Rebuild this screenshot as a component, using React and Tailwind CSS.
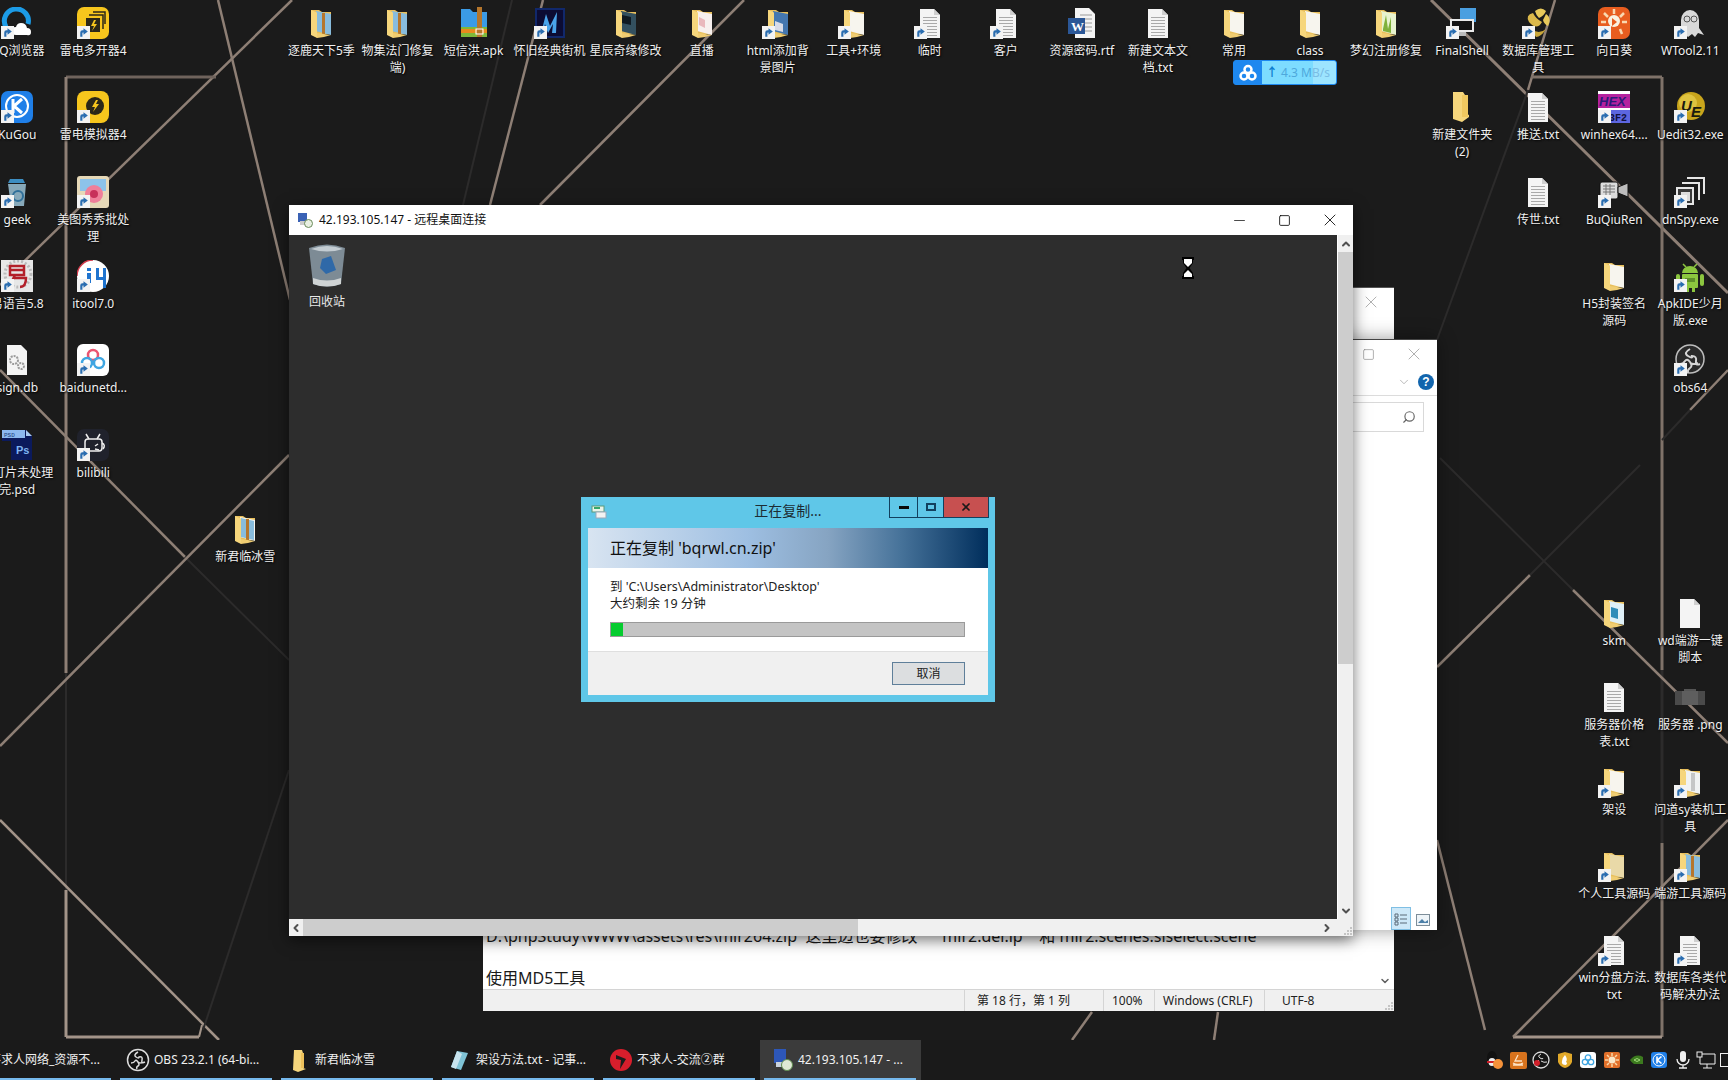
import { Minus, Square, X, ChevronUp, ChevronDown, ChevronLeft, ChevronRight, Search } from 'lucide-react'

const FONT = "font-['Noto_Sans','Noto_Sans_CJK_SC',sans-serif]"

// wallpaper lines, [x1, y1, x2, y2, colour, width]
const BRIGHT = '#8e7f75'
const FAINT = '#2c2b2b'
const LINES = [
    [218, 0, 290, 300, BRIGHT, 2.5],
    [292, 0, 0, 285, BRIGHT, 2.5],
    [66, 77, 216, 77, '#6f635c', 3],
    [66, 77, 66, 673, BRIGHT, 3],
    [66, 673, 66, 890, FAINT, 2],
    [66, 890, 66, 1037, '#a39489', 3],
    [66, 1037, 199, 1037, '#a39489', 3],
    [199, 1037, 202, 1025, '#a39489', 2],
    [0, 370, 185, 557, BRIGHT, 2.5],
    [185, 557, 289, 660, FAINT, 2],
    [0, 746, 289, 455, BRIGHT, 2.5],
    [0, 820, 219, 1040, '#a39489', 2.5],
    [289, 770, 203, 1030, FAINT, 2],
    [744, 0, 540, 205, BRIGHT, 2.5],
    [543, 0, 490, 205, BRIGHT, 2.5],
    [512, 0, 463, 205, FAINT, 2],
    [1092, 1012, 1072, 1040, BRIGHT, 2.5],
    [1218, 1012, 1214, 1040, BRIGHT, 2.5],
    [1431, 0, 1728, 293, BRIGHT, 3],
    [1555, 0, 1528, 90, BRIGHT, 2.5],
    [1528, 90, 1437, 340, FAINT, 2],
    [1531, 77, 1662, 77, '#7f7269', 3],
    [1662, 77, 1662, 670, '#7f7269', 3],
    [1662, 670, 1662, 843, FAINT, 3],
    [1662, 843, 1662, 1037, '#7f7269', 3],
    [1513, 1037, 1662, 1037, '#a39489', 3],
    [1728, 370, 1690, 410, BRIGHT, 2.5],
    [1690, 410, 1662, 440, FAINT, 2],
    [1437, 667, 1530, 575, BRIGHT, 2.5],
    [1530, 575, 1640, 465, FAINT, 2],
    [1440, 458, 1573, 590, FAINT, 2],
    [1573, 590, 1728, 743, BRIGHT, 2.5],
    [1728, 820, 1513, 1037, BRIGHT, 2.5],
    [1437, 840, 1485, 1030, BRIGHT, 2.5],
]

function Wallpaper() {
    return (
        <svg className="absolute inset-0" width="1728" height="1080" viewBox="0 0 1728 1080">
            {LINES.map(([x1, y1, x2, y2, c, w], i) => (
                <line key={i} x1={x1} y1={y1} x2={x2} y2={y2} stroke={c} strokeWidth={w} />
            ))}
        </svg>
    )
}

// --- icon drawings, all on a 32 box ---
const Svg = ({ children }) => <svg viewBox="0 0 32 32" width="32" height="32" className="block">{children}</svg>

function Folder({ inner = '#f7f5ee', accent }) {
    return (
        <Svg>
            <path d="M6 3h8l3 2h9v22H6z" fill="#e8bf5c" />
            <path d="M11 4l15 3v21l-15-4z" fill={inner} />
            {accent}
            <path d="M6 3l6 2.500V31l-6-3z" fill="#f6d67c" />
            <path d="M12 26l14 2-7 2-7 1z" fill="#f0cd72" />
        </Svg>
    )
}

function Doc({ lines = true }) {
    return (
        <Svg>
            <path d="M6 2h14l6 6v23H6z" fill="#f4f4f4" />
            <path d="M20 2l6 6h-6z" fill="#cfcfcf" />
            {lines && [10, 13, 16, 19, 22, 25, 28].map(y => <rect key={y} x="9" y={y} width="14" height="1" fill="#a9a9a9" />)}
        </Svg>
    )
}

const Shortcut = () => (
    <svg viewBox="0 0 12 12" width="13" height="13" className="absolute left-0 bottom-0">
        <rect width="12" height="12" fill="#f3f3f3" />
        <path d="M3 10V6q0-2 2-2h1V2l4 3-4 3V6H5.500q-.5 0-.5.500V10z" fill="#2a6db0" />
    </svg>
)

const ART = {
    qqb: <Svg><path d="M5 20A12 12 0 1 1 27 17" fill="none" stroke="#1c9be6" strokeWidth="5" /><path d="M15 28q-5 0-5-4t5-4q1-4 5-4 5 0 6 5 4 0 4 4t-4 3z" fill="#fff" /></Svg>,
    ld2: <Svg><rect width="32" height="32" rx="7" fill="#f7c61d" /><path d="M9 11h14v14H9z" fill="#2b2718" /><path d="M12 8h14v14" fill="none" stroke="#2b2718" strokeWidth="1.500" /><path d="M16 5h12v12" fill="none" stroke="#2b2718" strokeWidth="1.500" /><path d="M17 13l-3 6h3l-2 5 5-7h-3l2-4z" fill="#f7c61d" /></Svg>,
    ld: <Svg><rect width="32" height="32" rx="8" fill="#f7c61d" /><circle cx="18" cy="15" r="9" fill="#2b2718" /><path d="M19 9l-4 7h3l-2 5 6-8h-3l2-4z" fill="#f7c61d" /></Svg>,
    kugou: <Svg><rect width="32" height="32" rx="7" fill="#1f7fe8" /><circle cx="16" cy="15" r="11" fill="none" stroke="#fff" strokeWidth="2" /><path d="M12 8v14M21 8l-8 7 8 7" fill="none" stroke="#fff" strokeWidth="3" /></Svg>,
    geek: <Svg><path d="M9 3h13l2 4H7z" fill="#3d8ec2" /><path d="M7 8h18l-2 22H10z" fill="#87a9ba" /><circle cx="17" cy="20" r="5" fill="none" stroke="#2f6f99" strokeWidth="2" /></Svg>,
    meitu: <Svg><rect width="32" height="32" rx="3" fill="#e6d9b8" /><path d="M3 3h26v12H3z" fill="#8dc3ea" /><circle cx="17" cy="18" r="9" fill="#ef7f9a" /><circle cx="17" cy="18" r="4" fill="#c7305a" /></Svg>,
    yi: <Svg><rect width="32" height="32" fill="#e7e7e7" /><circle cx="17" cy="14" r="13" fill="none" stroke="#bbb" strokeWidth="3" strokeDasharray="2 2" /><path d="M9 6h14v9H9zM9 10h14M14 15l-4 8M13 18h12q0 9-6 9" fill="none" stroke="#b3202a" strokeWidth="2.500" /></Svg>,
    itool: <Svg><circle cx="16" cy="16" r="16" fill="#fff" /><path d="M16 0a16 16 0 0 0-16 16" fill="none" stroke="#d43b4c" strokeWidth="1.500" /><path d="M10 8h4v3h-4zM10 13h4v10h-4zM19 8h3v9h4V8h3v20h-3v-8h-7z" fill="#1f74cf" /></Svg>,
    db: <Svg><path d="M6 1h14l6 6v24H6z" fill="#f4f4f4" /><circle cx="13" cy="16" r="4" fill="none" stroke="#9a9a9a" strokeWidth="2" strokeDasharray="2 1" /><circle cx="20" cy="22" r="3" fill="none" stroke="#9a9a9a" strokeWidth="2" strokeDasharray="2 1" /></Svg>,
    baidu: <Svg><rect width="32" height="32" rx="6" fill="#fff" /><circle cx="16" cy="11" r="5" fill="none" stroke="#ea5470" strokeWidth="2.500" /><circle cx="10" cy="19" r="5" fill="none" stroke="#3fa6e2" strokeWidth="2.500" /><circle cx="22" cy="19" r="5" fill="none" stroke="#3fa6e2" strokeWidth="2.500" /></Svg>,
    bili: <Svg><rect width="32" height="32" rx="7" fill="#20222c" /><rect x="8" y="10" width="17" height="12" rx="3" fill="none" stroke="#eee" strokeWidth="1.500" /><path d="M12 10L9 5M20 10l3-5M25 14q4 2 1 6M18 17l3-2M18 20l4 1" stroke="#eee" strokeWidth="1.500" fill="none" /></Svg>,
    psd: <Svg><path d="M1 1h24l6 6v24H10V12H1z" fill="#0b1a5c" /><path d="M1 1h23v8H1z" fill="#8cb8ee" /><path d="M25 1l6 6h-6z" fill="#a9c9ef" /><text x="3" y="7.500" fontSize="6" fill="#20407a" fontFamily="Liberation Mono">PSD</text><text x="15" y="25" fontSize="11" fontWeight="700" fill="#7fb4f2" fontFamily="Liberation Sans">Ps</text></Svg>,
    apk: <Svg><path d="M3 2h9l3 3h14v25H3z" fill="#3b9be6" /><path d="M3 20h26v10H3z" fill="#7fb83a" /><path d="M3 22h26v4H3z" fill="#e88a1d" /><path d="M19 0h5v30h-5z" fill="#b5762c" /><rect x="18" y="22" width="7" height="5" fill="none" stroke="#fff" strokeWidth="1" /></Svg>,
    arcade: <Svg><rect x="1" y="1" width="30" height="30" fill="#11286b" /><rect x="3" y="3" width="26" height="26" fill="#0c0c33" /><path d="M7 26L12 7l4 12 7-14-1 21h-4l1-9-5 9-3-9-2 9z" fill="#4aa4ea" /></Svg>,
    word: <Svg><path d="M9 1h14l6 6v24H9z" fill="#f4f4f4" /><path d="M14 8h12M14 12h12M17 16h9M17 20h9M17 24h9" stroke="#9a9a9a" strokeWidth="1" /><rect x="2" y="11" width="17" height="16" fill="#2b5797" /><text x="5" y="24" fontSize="13" fontWeight="700" fill="#fff" fontFamily="Liberation Serif">W</text></Svg>,
    shell: <Svg><rect x="14" y="1" width="16" height="14" fill="#4a9fe0" /><rect x="4" y="12" width="24" height="13" fill="#eaeaea" /><rect x="6" y="14" width="20" height="9" fill="#141414" /><path d="M12 25h8v4h-8z" fill="#bbb" /></Svg>,
    dbm: <Svg><path d="M7 15Q3 8 11 6q3 6 9 9-5 9-13 0z" fill="#dcb94a" /><path d="M13 4q6-5 11 0-2 5-7 7-3-3-4-7zM24 7q6 4 2 12-4-2-5-6z" fill="#e8c95a" /><path d="M9 22q8 6 15 0-5 8-10 8z" fill="#c9a63a" /></Svg>,
    sun: <Svg><rect width="32" height="32" rx="7" fill="#e85d1f" /><circle cx="16" cy="14" r="6" fill="#f9f1e0" /><path d="M16 2v5M6 6l4 4M26 6l-4 4M3 15h5M24 15h5M10 22l-2 5M22 22l2 5" stroke="#f9d8b0" strokeWidth="2.500" /><path d="M14 11l5 4-5 4z" fill="#e85d1f" /></Svg>,
    ghost: <Svg><path d="M7 30V13a9 10 0 0 1 18 0v8l5 7-6-2-3 4-3-3-4 3-3-3z" fill="#d9d9d9" /><circle cx="13" cy="12" r="3" fill="none" stroke="#555" /><circle cx="20" cy="12" r="3" fill="none" stroke="#555" /></Svg>,
    hex: <Svg><rect width="32" height="32" fill="#fff" /><rect y="3" width="32" height="14" fill="#b5219f" /><text x="1" y="15" fontSize="13" fontWeight="700" fontStyle="italic" fill="#2c1a78" fontFamily="Liberation Sans">HEX</text><rect y="19" width="32" height="13" fill="#5d66e0" /><text x="11" y="30" fontSize="10" fontWeight="700" fill="#121240" fontFamily="Liberation Mono">3F2</text></Svg>,
    ue: <Svg><circle cx="17" cy="15" r="14" fill="#c9a51c" /><circle cx="14" cy="12" r="9" fill="#e8d050" opacity="0.7" /><text x="7" y="20" fontSize="15" fontWeight="700" fontStyle="italic" fill="#1a1a10" fontFamily="Liberation Sans">U</text><text x="17" y="26" fontSize="15" fontWeight="700" fontStyle="italic" fill="#1a1a10" fontFamily="Liberation Sans">E</text></Svg>,
    cam: <Svg><rect x="2" y="6" width="18" height="17" rx="2" fill="#dcdcdc" stroke="#111" /><path d="M5 10h12M5 13h12M5 16h12M8 8v13M12 8v13" stroke="#777" /><path d="M20 11l10-4v14l-10-4z" fill="#bdbdbd" stroke="#111" /></Svg>,
    spy: <Svg><path d="M13 2h17v16M8 7h17v17" fill="none" stroke="#e6e6e6" strokeWidth="2" /><rect x="3" y="12" width="16" height="16" fill="#3a3a3a" stroke="#e6e6e6" strokeWidth="2" /><rect x="7" y="16" width="9" height="9" fill="#ddd" /></Svg>,
    apkide: <Svg><path d="M9 4l3 3M23 4l-3 3" stroke="#8cc63f" strokeWidth="1.500" /><path d="M8 13a8 7 0 0 1 16 0z" fill="#8cc63f" /><rect x="8" y="14" width="16" height="14" rx="1" fill="#8cc63f" /><rect x="2" y="14" width="4" height="12" rx="2" fill="#8cc63f" /><rect x="26" y="14" width="4" height="12" rx="2" fill="#8cc63f" /><rect x="12" y="26" width="3" height="6" fill="#8cc63f" /><rect x="18" y="26" width="3" height="6" fill="#8cc63f" /><path d="M11 18h10v4H11z" fill="#5f8f2b" /></Svg>,
    obs: <Svg><circle cx="16" cy="15" r="14" fill="#2a2a2a" stroke="#bdbdbd" strokeWidth="1.500" /><path d="M16 5q-7 4-2 7t4 0q5 0 4 5t4 3M6 20q3 0 5-3t5 1 0 6-2 5M24 19q-4 2-8 0" fill="none" stroke="#d5d5d5" strokeWidth="2" /></Svg>,
    blur: <Svg><rect x="1" y="10" width="30" height="14" fill="#4a4a4a" /><rect x="10" y="8" width="12" height="2" fill="#555" /><rect x="8" y="10" width="16" height="14" fill="#5e5e5e" /></Svg>,
}

const folderArt = (inner, accent) => <Folder inner={inner} accent={accent} />

const ZIP = <g><path d="M12 5l13 3v19l-13-3z" fill="#88bcdd" /><rect x="17" y="6" width="3" height="21" fill="#b5762c" /></g>

const ICONS = [
    // left columns
    { c: 0, r: 0, n: 'QQ浏览器', a: ART.qqb, s: 1 },
    { c: 1, r: 0, n: '雷电多开器4', a: ART.ld2, s: 1 },
    { c: 0, r: 1, n: 'KuGou', a: ART.kugou, s: 1 },
    { c: 1, r: 1, n: '雷电模拟器4', a: ART.ld, s: 1 },
    { c: 0, r: 2, n: 'geek', a: ART.geek, s: 1 },
    { c: 1, r: 2, n: '美图秀秀批处\n理', a: ART.meitu, s: 1 },
    { c: 0, r: 3, n: '易语言5.8', a: ART.yi, s: 1 },
    { c: 1, r: 3, n: 'itool7.0', a: ART.itool, s: 1 },
    { c: 0, r: 4, n: 'sign.db', a: ART.db },
    { c: 1, r: 4, n: 'baidunetd...', a: ART.baidu, s: 1 },
    { c: 0, r: 5, n: '幻灯片未处理\n完.psd', a: ART.psd },
    { c: 1, r: 5, n: 'bilibili', a: ART.bili, s: 1 },
    { c: 3, r: 6, n: '新君临冰雪', a: folderArt('#f7f5ee', ZIP) },
    // top row
    { c: 4, r: 0, n: '逐鹿天下5季', a: folderArt('#88bcdd', ZIP) },
    { c: 5, r: 0, n: '物集法门修复\n端)', a: folderArt('#88bcdd', ZIP) },
    { c: 6, r: 0, n: '短信洪.apk', a: ART.apk },
    { c: 7, r: 0, n: '怀旧经典街机', a: ART.arcade, s: 1 },
    { c: 8, r: 0, n: '星辰奇缘修改', a: folderArt('#33505f', <path d="M12 8l9 2v8l-9-2z" fill="#101a22" />) },
    { c: 9, r: 0, n: '直播', a: folderArt('#f7f0ee', <path d="M13 10l6 3v8l-6-3z" fill="#e9b8bc" />) },
    { c: 10, r: 0, n: 'html添加背\n景图片', a: folderArt('#4477b0', <path d="M13 14l8 3v8l-8-2z" fill="#d8dce8" />), s: 1 },
    { c: 11, r: 0, n: '工具+环境', a: folderArt('#f7f5ee') , s: 1 },
    { c: 12, r: 0, n: '临时', a: <Doc />, s: 1 },
    { c: 13, r: 0, n: '客户', a: <Doc />, s: 1 },
    { c: 14, r: 0, n: '资源密码.rtf', a: ART.word },
    { c: 15, r: 0, n: '新建文本文\n档.txt', a: <Doc /> },
    { c: 16, r: 0, n: '常用', a: folderArt('#f7f5ee') },
    { c: 17, r: 0, n: 'class', a: folderArt('#f7f5ee') },
    { c: 18, r: 0, n: '梦幻注册修复', a: folderArt('#e8f3cf', <path d="M13 22l3-14 2 14 3-12v16l-8-2z" fill="#7fb13a" />) },
    { c: 19, r: 0, n: 'FinalShell', a: ART.shell, s: 1 },
    { c: 20, r: 0, n: '数据库管理工\n具', a: ART.dbm, s: 1 },
    { c: 21, r: 0, n: '向日葵', a: ART.sun, s: 1 },
    { c: 22, r: 0, n: 'WTool2.11', a: ART.ghost, s: 1 },
    // right columns
    { c: 19, r: 1, n: '新建文件夹\n(2)', a: <Svg><path d="M7 1h10l2 3v18l4 2v2l-7 5-9-3z" fill="#f6d67c" /><path d="M16 4h6v22h-6z" fill="#f0c860" /></Svg> },
    { c: 20, r: 1, n: '推送.txt', a: <Doc /> },
    { c: 21, r: 1, n: 'winhex64....', a: ART.hex, s: 1 },
    { c: 22, r: 1, n: 'Uedit32.exe', a: ART.ue, s: 1 },
    { c: 20, r: 2, n: '传世.txt', a: <Doc /> },
    { c: 21, r: 2, n: 'BuQiuRen', a: ART.cam, s: 1 },
    { c: 22, r: 2, n: 'dnSpy.exe', a: ART.spy, s: 1 },
    { c: 21, r: 3, n: 'H5封装签名\n源码', a: folderArt('#f7f5ee') },
    { c: 22, r: 3, n: 'ApkIDE少月\n版.exe', a: ART.apkide, s: 1 },
    { c: 22, r: 4, n: 'obs64', a: ART.obs, s: 1 },
    { c: 21, r: 7, n: 'skm', a: folderArt('#dff0f7', <path d="M13 10l7 2v10l-7-2z" fill="#2f8cb8" />) },
    { c: 22, r: 7, n: 'wd端游一键\n脚本', a: <Doc lines={false} /> },
    { c: 21, r: 8, n: '服务器价格\n表.txt', a: <Doc /> },
    { c: 22, r: 8, n: '服务器 .png', a: ART.blur },
    { c: 21, r: 9, n: '架设', a: folderArt('#f7f5ee'), s: 1 },
    { c: 22, r: 9, n: '问道sy装机工\n具', a: folderArt('#f0f2f2', <path d="M17 7h4v18h-4z" fill="#9a9a9a" opacity="0.5" />), s: 1 },
    { c: 21, r: 10, n: '个人工具源码', a: folderArt('#e9d9a8'), s: 1 },
    { c: 22, r: 10, n: '端游工具源码', a: folderArt('#88bcdd', ZIP), s: 1 },
    { c: 21, r: 11, n: 'win分盘方法.\ntxt', a: <Doc />, s: 1 },
    { c: 22, r: 11, n: '数据库各类代\n码解决办法', a: <Doc />, s: 1 },
]

function DesktopIcon({ c, r, n, a, s }) {
    // desktop grid: 76px columns, 84.3px rows
    const left = 17.2 + c * 76.05 - 40
    const top = 7 + r * 84.3
    return (
        <div className="absolute w-[80px] flex flex-col items-center" style={{ left, top }}>
            <div className="relative w-8 h-8">
                {a}
                {s && <Shortcut />}
            </div>
            <div className="mt-[3px] text-[12px] leading-[17px] text-[#f0f0f0] text-center whitespace-pre [text-shadow:1px_1px_2px_#000]">{n}</div>
        </div>
    )
}

function BaiduSpeed() {
    return (
        <div className="absolute left-[1233px] top-[60px] w-[104px] h-[25px] flex rounded-[3px] overflow-hidden bg-[#1e88ef] border border-[#1e88ef]">
            <div className="w-[28px] flex items-center justify-center">
                <svg viewBox="0 0 20 20" width="20" height="20">
                    <circle cx="10" cy="6.500" r="3.500" fill="none" stroke="#fff" strokeWidth="2.500" />
                    <circle cx="6" cy="13" r="3.500" fill="none" stroke="#fff" strokeWidth="2.500" />
                    <circle cx="14" cy="13" r="3.500" fill="none" stroke="#fff" strokeWidth="2.500" />
                </svg>
            </div>
            <div className="flex-1 bg-[#7ddcff] flex items-center pl-[4px] text-[12px] text-[#4ea8dc] whitespace-nowrap relative">
                <span className="font-bold text-[#0e7fd0] mr-[3px]">↑</span>4.3 MB/s
                <div className="absolute right-0 inset-y-0 w-[23px] bg-white/25" />
            </div>
        </div>
    )
}

const Grip = ({ className }) => (
    <svg viewBox="0 0 10 10" width="10" height="10" className={className}>
        <path d="M7 1h2v2H7zM4 4h2v2H4zM7 4h2v2H7zM1 7h2v2H1zM4 7h2v2H4zM7 7h2v2H7z" fill="#c4c4c4" />
    </svg>
)

function Notepad() {
    return (
        <div className="absolute left-[483px] top-[287px] w-[911px] h-[724px] bg-white flex flex-col border-t border-[#555]">
            <div className="h-[30px] flex justify-end pr-[13px] pt-[4px]">
                <X size={20} strokeWidth={0.800} className="text-[#8a8a8a]" />
            </div>
            <div className="flex-1 flex flex-col justify-end relative">
                <div className="pl-[3px] text-[16px] leading-[21px] text-[#1a1a1a] whitespace-pre">
                    <div>{'D:\\phpStudy\\WWW\\assets\\res\\mir264.zip  这里边也要修改      mir2.der.ip    和 mir2.scenes.slselect.scene'}</div>
                    <div>&nbsp;</div>
                    <div>使用MD5工具</div>
                </div>
                <ChevronDown size={12} strokeWidth={3} className="absolute right-[3px] bottom-[2px] text-[#606060]" />
            </div>
            <div className="h-[22px] bg-[#f0f0f0] border-t border-[#d4d4d4] flex items-center text-[12px] text-[#222] relative">
                <div className="w-[481px]" />
                <div className="w-[139px] h-full flex items-center pl-[12px] border-l border-[#d4d4d4]">第 18 行，第 1 列</div>
                <div className="w-[51px] h-full flex items-center pl-[8px] border-l border-[#d4d4d4]">100%</div>
                <div className="w-[110px] h-full flex items-center pl-[8px] border-l border-[#d4d4d4]">Windows (CRLF)</div>
                <div className="flex-1 h-full flex items-center pl-[17px] border-l border-[#d4d4d4]">UTF-8</div>
                <Grip className="absolute right-0 bottom-0" />
            </div>
        </div>
    )
}

function Explorer() {
    return (
        <div className="absolute left-[1000px] top-[339px] w-[437px] h-[591px] bg-white flex flex-col items-end border-t border-[#444] shadow-[0_0_18px_rgba(0,0,0,0.4)]">
            <div className="h-[28px] flex items-center gap-[29px] pr-[13px]">
                <Square size={13} strokeWidth={1.200} className="text-[#888]" />
                <X size={20} strokeWidth={0.800} className="text-[#888]" />
            </div>
            <div className="h-[27px] flex items-center gap-[7px] pr-[3px]">
                <ChevronDown size={14} strokeWidth={1} className="text-[#888]" />
                <div className="w-[16px] h-[16px] rounded-full bg-[#1265ad] text-white text-[12px] font-bold leading-[16px] text-center font-['Liberation_Sans',sans-serif]">?</div>
            </div>
            <div className="w-full border-t border-[#dcdcdc]" />
            <div className="h-[30px] w-[200px] mt-[6px] mr-[13px] border border-[#d9d9d9] flex items-center justify-end pr-[7px]">
                <Search size={14} strokeWidth={2} className="text-[#666] -scale-x-100" />
            </div>
            <div className="flex-1" />
            <div className="flex items-end gap-[5px] pr-[7px]">
                <div className="w-[20px] h-[23px] bg-[#cde8f8] border border-[#7fbfe4] flex items-center justify-center">
                    <svg viewBox="0 0 14 14" width="14" height="14"><path d="M1 2h3v3H1zM1 6h3v3H1zM1 10h3v3H1zM6 3h7M6 7h7M6 11h7" fill="none" stroke="#5a6a78" /></svg>
                </div>
                <div className="pb-[4px]">
                    <svg viewBox="0 0 14 12" width="14" height="12"><rect x="0.500" y="0.500" width="13" height="11" fill="#eef4f8" stroke="#7d8d99" /><path d="M2 9l4-4 3 3 3-2v3H2z" fill="#4c7fa8" /></svg>
                </div>
            </div>
        </div>
    )
}

function CopyDialog() {
    return (
        <div className="absolute left-[292px] top-[262px] w-[414px] h-[205px] bg-[#5fc7e8] flex flex-col px-[7px] pb-[7px]">
            <div className="h-[31px] relative flex items-center justify-center text-[14px] text-[#1c2c33] shrink-0 -mx-[7px]">
                <svg viewBox="0 0 16 16" width="16" height="16" className="absolute left-[10px] top-[7px]">
                    <rect x="1" y="2" width="12" height="6" fill="#e9f4e9" stroke="#5a9a7a" />
                    <rect x="3" y="3" width="6" height="2" fill="#35a86b" />
                    <rect x="5" y="8" width="10" height="6" fill="#f2f2f2" stroke="#9ab" />
                </svg>
                <span className="-translate-y-[2px]">正在复制...</span>
                <div className="absolute right-[6px] top-0 flex h-[21px] border-x border-b border-[#12405e]">
                    <div className="w-[28px] flex items-center justify-center border-r border-[#12405e]"><div className="w-[10px] h-[3px] bg-[#0a0a0a]" /></div>
                    <div className="w-[26px] flex items-center justify-center border-r border-[#12405e]"><div className="w-[10px] h-[8px] border-2 border-[#12405e]" /></div>
                    <div className="w-[44px] flex items-center justify-center bg-[#c75050]"><X size={12} strokeWidth={3.500} className="text-[#1a1a1a]" /></div>
                </div>
            </div>
            <div className="h-[40px] shrink-0 bg-[linear-gradient(90deg,#d8e4f1_0%,#9ebfe2_40%,#86a4c2_60%,#47739a_78%,#002e5c_100%)] flex items-center pl-[22px] text-[16px] text-[#111]">
                正在复制 'bqrwl.cn.zip'
            </div>
            <div className="h-[84px] shrink-0 bg-white border-b border-[#dfdfdf] pl-[22px] pr-[23px] pt-[10px] text-[12.500px] leading-[17px] text-[#222]">
                <div>到 'C:\Users\Administrator\Desktop'</div>
                <div>大约剩余 19 分钟</div>
                <div className="mt-[10px] h-[15px] bg-[#c4c4c4] border border-[#9a9a9a]">
                    <div className="h-full w-[12px] bg-[#06cc2f]" />
                </div>
            </div>
            <div className="flex-1 bg-[#f0f0f0] flex justify-end items-start pr-[23px] pt-[10px]">
                <div className="w-[73px] h-[23px] bg-[#dcdee0] border border-[#5f7f9a] text-[12px] text-[#222] flex items-center justify-center">取消</div>
            </div>
        </div>
    )
}

function RemoteWindow() {
    return (
        <div className="absolute left-[289px] top-[205px] w-[1064px] h-[731px] flex flex-col bg-white shadow-[0_4px_14px_rgba(0,0,0,0.55)]">
            <div className="h-[30px] flex items-center shrink-0">
                <svg viewBox="0 0 16 16" width="16" height="16" className="ml-[8px]">
                    <rect x="1" y="1" width="9" height="9" fill="#3a62b5" />
                    <rect x="3" y="9" width="9" height="4" fill="#ccc" />
                    <circle cx="11.500" cy="11.500" r="4" fill="#e9f0e2" stroke="#6a8a5a" />
                </svg>
                <span className="ml-[6px] text-[12px] text-[#111]">42.193.105.147 - 远程桌面连接</span>
                <div className="flex-1" />
                <Minus size={17} strokeWidth={1} className="mr-[30px] text-black" />
                <Square size={13} strokeWidth={1.500} className="mr-[29px] text-black" />
                <X size={20} strokeWidth={1} className="mr-[13px] text-black" />
            </div>
            <div className="flex-1 flex min-h-0">
                <div className="flex-1 bg-[#2d2d2d] relative">
                    <div className="absolute left-[-1px] top-[8px] w-[78px] flex flex-col items-center">
                        <svg viewBox="0 0 38 44" width="38" height="44">
                            <path d="M1 5q18-7 36 0l-4 36q-14 5-28 0z" fill="#7d8b95" />
                            <path d="M3 6q16-6 32 0-16 5-32 0z" fill="#c3ccd2" />
                            <path d="M14 16l9-3 5 14-10 4-6-6z" fill="#2f69a8" />
                            <path d="M5 35q14 5 28 0v6q-14 5-28 0z" fill="#cfd3d4" />
                        </svg>
                        <span className="mt-[6px] text-[12px] text-[#e8e8e8]">回收站</span>
                    </div>
                    <svg viewBox="0 0 12 22" width="12" height="22" className="absolute left-[893px] top-[22px]">
                        <path d="M0 0h12v3h-1v3L7.500 11 11 16v3h1v3H0v-3h1v-3L4.500 11 1 6V3H0z" fill="#000" />
                        <path d="M2 2h8v4L6 10 2 6zM2 20v-3l4-4 4 4v3z" fill="#fff" />
                    </svg>
                    <CopyDialog />
                </div>
                <div className="w-[16px] border-l border-white bg-[#f0f0f0] flex flex-col items-center">
                    <div className="h-[17px] flex items-center"><ChevronUp size={12} strokeWidth={4} className="text-[#505050]" /></div>
                    <div className="h-[412px] w-full bg-[#cdcdcd]" />
                    <div className="flex-1" />
                    <div className="h-[17px] flex items-center"><ChevronDown size={12} strokeWidth={4} className="text-[#505050]" /></div>
                </div>
            </div>
            <div className="h-[17px] bg-[#f0f0f0] flex items-center shrink-0 relative">
                <div className="w-[14px] flex justify-center"><ChevronLeft size={12} strokeWidth={4} className="text-[#505050]" /></div>
                <div className="w-[555px] h-full bg-[#cdcdcd]" />
                <div className="flex-1" />
                <ChevronRight size={12} strokeWidth={4} className="mr-[20px] text-[#505050]" />
                <Grip className="absolute right-0 bottom-0" />
            </div>
        </div>
    )
}

const TASKS = [
    { t: '不求人网络_资源不...', i: <div className="w-[20px]" /> },
    { t: 'OBS 23.2.1 (64-bi...', i: <svg viewBox="0 0 24 24" width="24" height="24"><circle cx="12" cy="12" r="10.500" fill="#111" stroke="#ddd" strokeWidth="1.500" /><path d="M12 4q-5 3-2 5t3 0q4-1 3 3t3 2M5 15q3 0 4-2t3 1 0 4-1 3M18 14q-3 2-6 0" fill="none" stroke="#ddd" strokeWidth="1.500" /></svg> },
    { t: '新君临冰雪', i: <svg viewBox="0 0 24 24" width="24" height="24"><path d="M7 2h8l1 3v15l3 1-8 3-5-2z" fill="#f6d67c" /><path d="M14 5h3v15h-3z" fill="#eec25c" /></svg> },
    { t: '架设方法.txt - 记事...', i: <svg viewBox="0 0 24 24" width="24" height="24"><path d="M9 3l11 2-7 17-10-3z" fill="#7fc3d6" /><path d="M9 3l5 3-6 15-5-2z" fill="#c8e4ee" /></svg> },
    { t: '不求人-交流②群', i: <svg viewBox="0 0 24 24" width="24" height="24"><circle cx="12" cy="12" r="11" fill="#d81e2c" /><path d="M7 7l10 4-6 10 1-9-5-1z" fill="#1c1c1c" /></svg> },
    { t: '42.193.105.147 - ...', active: 1, i: <svg viewBox="0 0 24 24" width="24" height="24"><rect x="4" y="1" width="12" height="14" fill="#2d57b8" /><rect x="6" y="14" width="12" height="5" fill="#c9d2dd" /><circle cx="17" cy="17" r="5.500" fill="#dfe8d4" stroke="#5f8c50" /></svg> },
]

const TRAY = [
    <svg viewBox="0 0 20 20" width="20" height="20"><ellipse cx="8" cy="8" rx="5" ry="7" fill="#111" /><ellipse cx="8" cy="12" rx="3.500" ry="4" fill="#eee" /><path d="M3 11h9v2H3z" fill="#d01f2a" /><circle cx="14" cy="14" r="5" fill="#f5923a" /></svg>,
    <svg viewBox="0 0 20 20" width="20" height="20"><rect x="2" y="2" width="17" height="17" rx="2" fill="#d8731d" /><path d="M10 5l-3 6h7M5 13q5 3 10 0M5 15h10" fill="none" stroke="#fce2c4" strokeWidth="1.300" /></svg>,
    <svg viewBox="0 0 20 20" width="20" height="20"><circle cx="10" cy="10" r="8" fill="#151515" stroke="#ddd" strokeWidth="1.300" /><path d="M10 4q-4 2-1 4t3 0M4 12q3 0 4-2M16 12q-3 1-6-1" fill="none" stroke="#ddd" /><circle cx="6" cy="13" r="3" fill="#d21f2a" /></svg>,
    <svg viewBox="0 0 20 20" width="20" height="20"><path d="M3 4l7-2 7 2v8q-2 5-7 6-5-1-7-6z" fill="#e1a92a" /><path d="M10 5q3 4 1 7 2 1 0 3-5 0-4-4 0-3 3-6z" fill="#fff" /></svg>,
    <svg viewBox="0 0 20 20" width="20" height="20"><rect x="2" y="2" width="16" height="16" rx="3" fill="#fff" /><circle cx="10" cy="7.500" r="2.700" fill="none" stroke="#3fa6e2" strokeWidth="1.300" /><circle cx="7" cy="12" r="2.700" fill="none" stroke="#3fa6e2" strokeWidth="1.300" /><circle cx="13" cy="12" r="2.700" fill="none" stroke="#3fa6e2" strokeWidth="1.300" /></svg>,
    <svg viewBox="0 0 20 20" width="20" height="20"><rect x="2" y="2" width="16" height="16" rx="2" fill="#e2702a" /><circle cx="10" cy="10" r="3.500" fill="#fbe7c8" /><path d="M10 3v3M10 14v3M3 10h3M14 10h3M5 5l2 2M15 5l-2 2M5 15l2-2M15 15l-2-2" stroke="#f9d8a8" strokeWidth="1.500" /></svg>,
    <svg viewBox="0 0 20 20" width="20" height="20"><path d="M4 10q6-7 13-3v7H8q-3-2-4-4z" fill="#3c7a1e" /><path d="M8 10q3-3 6 0-3 3-6 0z" fill="none" stroke="#9fd97a" /></svg>,
    <svg viewBox="0 0 20 20" width="20" height="20"><rect x="2" y="2" width="16" height="16" rx="3" fill="#1f7fe8" /><circle cx="10" cy="10" r="6" fill="none" stroke="#fff" /><path d="M8 6.500v7M12.500 6.500l-4 3.500 4 3.500" fill="none" stroke="#fff" strokeWidth="1.600" /></svg>,
    <svg viewBox="0 0 20 20" width="20" height="20"><rect x="7" y="1" width="6" height="11" rx="3" fill="#f0f0f0" /><path d="M4 9a6 6 0 0 0 12 0M10 15v3M6 18h8" fill="none" stroke="#f0f0f0" strokeWidth="1.300" /></svg>,
    <svg viewBox="0 0 20 20" width="20" height="20"><rect x="1" y="2" width="5" height="5" fill="none" stroke="#f0f0f0" /><path d="M6 4h13v10H4v-7M11 14v4M7 18h9" fill="none" stroke="#f0f0f0" /></svg>,
]

function Taskbar() {
    return (
        <div className="absolute left-0 right-0 bottom-0 h-[40px] bg-[#1a1a1a] flex items-stretch overflow-hidden text-[12px] text-[#f0f0f0]">
            <div className="flex -ml-[45px]">
                {TASKS.map(task => (
                    <div key={task.t} className={`relative w-[161px] flex items-center pl-[10px] gap-[4px] whitespace-nowrap ${task.active ? 'bg-[#3b3b3b]' : ''}`}>
                        {task.i}
                        <span>{task.t}</span>
                        <div className="absolute bottom-0 left-[4px] w-[152px] h-[2px] bg-[#76b9ed]" />
                    </div>
                ))}
            </div>
            <div className="flex-1" />
            <div className="flex items-center gap-[3.600px] -mr-[4px]">
                {TRAY.map((icon, i) => <div key={i} className="w-[20px] h-[20px]">{icon}</div>)}
                <div className="w-[12px] h-[14px] border border-[#f0f0f0]" />
            </div>
        </div>
    )
}

export default function App() {
    return (
        <div className={`relative w-[1728px] h-[1080px] overflow-hidden bg-[#1b1b1b] ${FONT}`}>
            <Wallpaper />
            {ICONS.map(icon => <DesktopIcon key={icon.n} {...icon} />)}
            <BaiduSpeed />
            <Notepad />
            <Explorer />
            <RemoteWindow />
            <Taskbar />
        </div>
    )
}
